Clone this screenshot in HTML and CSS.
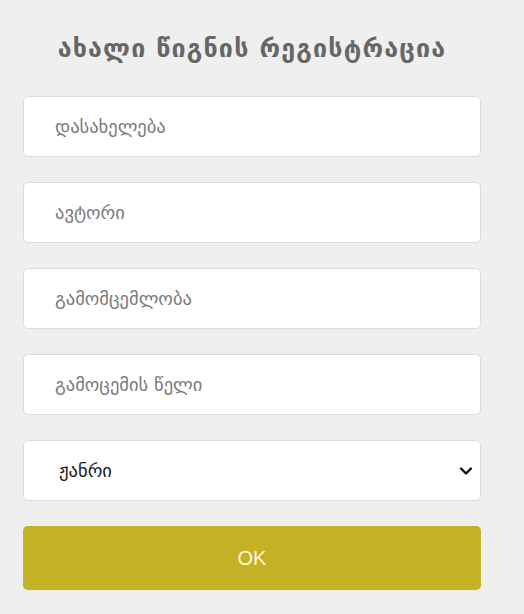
FILE: index.html
```html
<!DOCTYPE html>
<html lang="ka">
<head>
<meta charset="utf-8">
<title>ახალი წიგნის რეგისტრაცია</title>
<link rel="stylesheet" href="styles.css">
</head>
<body>
<form class="form">
  <h1 class="title">ახალი წიგნის რეგისტრაცია</h1>
  <input class="field" type="text" placeholder="დასახელება">
  <input class="field" type="text" placeholder="ავტორი">
  <input class="field" type="text" placeholder="გამომცემლობა">
  <input class="field" type="text" placeholder="გამოცემის წელი">
  <div class="select-wrap">
    <select class="field select">
      <option>ჟანრი</option>
    </select>
    <svg class="chevron" width="14" height="10" viewBox="0 0 14 10"><path d="M2 2.5 L7 7.5 L12 2.5" fill="none" stroke="#111" stroke-width="2.4" stroke-linecap="round" stroke-linejoin="round"/></svg>
  </div>
  <button class="ok" type="button">OK</button>
</form>
</body>
</html>
```
FILE: styles.css
```css
html, body {
  margin: 0;
  padding: 0;
  background: #efefef;
}
body {
  font-family: "DejaVu Sans", "Noto Sans", sans-serif;
}
.form {
  width: 458px;
  margin-left: 23px;
  display: flex;
  flex-direction: column;
  gap: 25px;
  padding-top: 29px;
}
.title {
  margin: 0 0 2px;
  text-align: center;
  font-size: 25px;
  font-weight: bold;
  color: #666;
  letter-spacing: 1.2px;
  line-height: 40px;
}
.field {
  box-sizing: border-box;
  width: 100%;
  height: 61px;
  border: 1px solid #dcdcdc;
  border-radius: 5px;
  background: #fff;
  padding: 0 0 0 31px;
  font-family: "DejaVu Sans", sans-serif;
  font-size: 18.5px;
  color: #222;
  outline: none;
}
.field::placeholder {
  color: #7a7a7a;
}
.select-wrap {
  position: relative;
}
.select {
  appearance: none;
  -webkit-appearance: none;
  padding-left: 35px;
  color: #1a1a1a;
}
.chevron {
  position: absolute;
  right: 8px;
  top: 26px;
  pointer-events: none;
}
.ok {
  height: 64px;
  border: none;
  border-radius: 5px;
  background: #c4b124;
  color: #fdf8d8;
  font-family: "Liberation Sans", Arial, sans-serif;
  font-size: 20px;
}
```
